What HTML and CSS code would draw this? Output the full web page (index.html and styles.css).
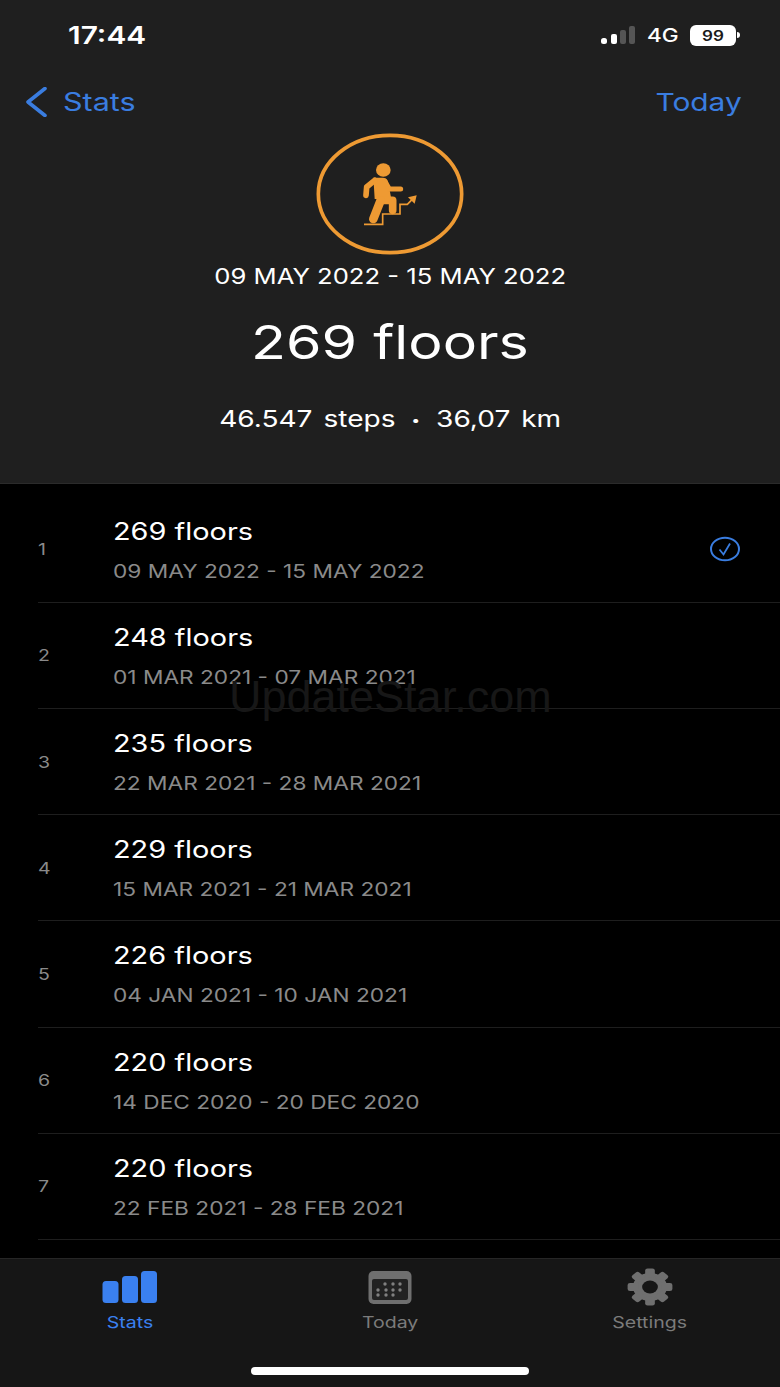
FILE: index.html
```html
<!DOCTYPE html>
<html lang="en">
<head>
<meta charset="utf-8">
<title>Floors</title>
<link rel="stylesheet" href="styles.css">
</head>
<body>
<div class="screen">
  <header class="hero">
    <div class="status">
      <span class="txt clock">17:44</span>
      <div class="status-right">
        <svg class="signal" width="35" height="19" viewBox="0 0 35 19"><rect x="0" y="12" width="6" height="6" rx="2.500" fill="#fff"/><rect x="10" y="8" width="6" height="10" rx="2" fill="#fff"/><rect x="19" y="4" width="6" height="14" rx="2" fill="#555"/><rect x="28" y="0" width="6" height="18" rx="2" fill="#555"/></svg>
        <span class="txt net">4G</span>
        <div class="battery"><span class="txt batt-num">99</span></div>
        <span class="nub"></span>
      </div>
    </div>
    <nav class="navbar">
      <div class="back">
        <svg width="22" height="30" viewBox="0 0 22 30"><path d="M20 1.500 3 15l17 13.500" fill="none" stroke="#3a7de0" stroke-width="3.600" stroke-linecap="round" stroke-linejoin="round"/></svg>
        <span class="txt nav-link">Stats</span>
      </div>
      <span class="txt nav-link nav-right">Today</span>
    </nav>
    <svg class="badge" width="200" height="140" viewBox="0 0 600 420">
      <ellipse cx="300" cy="207" rx="215" ry="176" fill="none" stroke="#ee9a33" stroke-width="11"/>
      <ellipse cx="280" cy="135" rx="22" ry="20" fill="#ee9a33"/>
      <path d="M250 158h28c8 0 14 4 16 12l10 52h-50z" fill="#ee9a33"/>
      <g fill="none" stroke="#ee9a33" stroke-linecap="round" stroke-linejoin="round">
        <path d="M254 166 230 186 228 211" stroke-width="17"/>
        <path d="M284 168 298 192H332" stroke-width="15"/>
        <path d="M272 226H308V256" stroke-width="23"/>
        <path d="M272 226 250 282" stroke-width="26"/>
      </g>
      <path d="M222 298h56v-31h52v-29h22l20-20" fill="none" stroke="#ee9a33" stroke-width="5"/>
      <path d="M380 211l-26 6 20 19z" fill="#ee9a33"/>
    </svg>
    <div class="txt hero-date">09 MAY 2022 - 15 MAY 2022</div>
    <div class="txt hero-total">269 floors</div>
    <div class="txt hero-sub">46.547 steps <span class="dot">•</span> 36,07 km</div>
  </header>

  <main class="list">
    <div class="row"><span class="txt rank">1</span><div class="info"><div class="txt title">269 floors</div><div class="txt date">09 MAY 2022 - 15 MAY 2022</div></div>
      <svg class="check" width="32" height="26" viewBox="0 0 32 26"><ellipse cx="16" cy="13" rx="14" ry="11.300" fill="none" stroke="#3a7de0" stroke-width="2"/><path d="M10.500 13.500l4 5 6.500-11" fill="none" stroke="#3a7de0" stroke-width="1.800"/></svg>
    </div>
    <div class="row"><span class="txt rank">2</span><div class="info"><div class="txt title">248 floors</div><div class="txt date">01 MAR 2021 - 07 MAR 2021</div></div></div>
    <div class="row"><span class="txt rank">3</span><div class="info"><div class="txt title">235 floors</div><div class="txt date">22 MAR 2021 - 28 MAR 2021</div></div></div>
    <div class="row"><span class="txt rank">4</span><div class="info"><div class="txt title">229 floors</div><div class="txt date">15 MAR 2021 - 21 MAR 2021</div></div></div>
    <div class="row"><span class="txt rank">5</span><div class="info"><div class="txt title">226 floors</div><div class="txt date">04 JAN 2021 - 10 JAN 2021</div></div></div>
    <div class="row"><span class="txt rank">6</span><div class="info"><div class="txt title">220 floors</div><div class="txt date">14 DEC 2020 - 20 DEC 2020</div></div></div>
    <div class="row"><span class="txt rank">7</span><div class="info"><div class="txt title">220 floors</div><div class="txt date">22 FEB 2021 - 28 FEB 2021</div></div></div>
    <div class="watermark">UpdateStar.com</div>
  </main>

  <footer class="tabbar">
    <div class="tabs">
      <div class="tab active">
        <svg width="56" height="38" viewBox="0 0 56 38"><g fill="#3a80f0"><rect x="0.500" y="13" width="16" height="22" rx="3.500"/><rect x="20" y="8" width="16" height="27" rx="3.500"/><rect x="39" y="3" width="16" height="32" rx="3.500"/></g></svg>
        <span class="txt tab-label">Stats</span>
      </div>
      <div class="tab">
        <svg width="44" height="38" viewBox="0 0 44 38">
          <rect x="0.500" y="3" width="43" height="33" rx="5" fill="#6f6f6f"/>
          <rect x="4" y="11" width="36" height="21" rx="2" fill="#222"/>
          <g fill="#808080">
            <circle cx="17" cy="16" r="1.700"/><circle cx="25" cy="16" r="1.700"/><circle cx="32" cy="16" r="1.700"/>
            <circle cx="10" cy="22" r="1.700"/><circle cx="18" cy="22" r="1.700"/><circle cx="25" cy="22" r="1.700"/><circle cx="32" cy="22" r="1.700"/>
            <circle cx="10" cy="27" r="1.700"/><circle cx="18" cy="27" r="1.700"/><circle cx="25" cy="27" r="1.700"/>
          </g>
        </svg>
        <span class="txt tab-label">Today</span>
      </div>
      <div class="tab">
        <svg width="46" height="38" viewBox="0 0 38 38" preserveAspectRatio="none">
          <g fill="#6f6f6f">
            <circle cx="19" cy="19" r="14"/>
            <rect x="15" y="0.500" width="8" height="9" rx="2"/>
            <rect x="15" y="0.500" width="8" height="9" rx="2" transform="rotate(45 19 19)"/>
            <rect x="15" y="0.500" width="8" height="9" rx="2" transform="rotate(90 19 19)"/>
            <rect x="15" y="0.500" width="8" height="9" rx="2" transform="rotate(135 19 19)"/>
            <rect x="15" y="0.500" width="8" height="9" rx="2" transform="rotate(180 19 19)"/>
            <rect x="15" y="0.500" width="8" height="9" rx="2" transform="rotate(225 19 19)"/>
            <rect x="15" y="0.500" width="8" height="9" rx="2" transform="rotate(270 19 19)"/>
            <rect x="15" y="0.500" width="8" height="9" rx="2" transform="rotate(315 19 19)"/>
          </g>
          <circle cx="19" cy="19" r="6.500" fill="#161616"/>
        </svg>
        <span class="txt tab-label">Settings</span>
      </div>
    </div>
    <div class="home-bar"></div>
  </footer>
</div>
</body>
</html>
```

FILE: styles.css
```css
* { box-sizing: border-box; }
html, body { margin: 0; padding: 0; background: #000; }
.screen {
  width: 780px;
  height: 1387px;
  display: flex;
  flex-direction: column;
  overflow: hidden;
  font-family: Inter, "Liberation Sans", sans-serif;
  color: #fff;
}
.txt { display: inline-block; white-space: nowrap; transform: scaleX(1.22); }

.hero {
  height: 484px;
  flex: none;
  background: #1f1f1f;
  border-bottom: 1px solid #2b2b2b;
  display: flex;
  flex-direction: column;
  align-items: center;
}
.status {
  width: 100%;
  height: 70px;
  padding: 0 40px 0 68px;
  display: flex;
  align-items: center;
  justify-content: space-between;
}
.clock { font-size: 24.5px; font-weight: 600; transform-origin: left center; }
.status-right { display: flex; align-items: center; }
.signal { margin-right: 11px; }
.net { font-size: 18.5px; font-weight: 500; width: 32px; margin-right: 11px; transform-origin: left center; }
.battery {
  width: 46px;
  height: 21px;
  background: #fff;
  border-radius: 6px;
  display: flex;
  align-items: center;
  justify-content: center;
}
.batt-num { font-size: 14px; font-weight: 600; color: #1a1a1a; }
.nub { width: 3px; height: 6px; margin-left: 1px; background: #fff; border-radius: 0 3px 3px 0; }

.navbar {
  width: 100%;
  height: 64px;
  padding: 0 38px 0 25px;
  display: flex;
  align-items: center;
  justify-content: space-between;
}
.back { display: flex; align-items: center; gap: 16px; }
.nav-link { font-size: 25px; color: #3a7de0; transform-origin: left center; }
.nav-right { font-size: 24.5px; transform-origin: right center; }

.badge { margin-top: -9px; flex: none; }
.hero-date { font-size: 21px; line-height: 24px; }
.hero-total { font-size: 47px; line-height: 56px; margin-top: 25px; }
.hero-sub { font-size: 23px; line-height: 28px; margin-top: 35px; word-spacing: 2.5px; }
.dot { font-size: 13px; vertical-align: 2px; margin: 0 4px; }

.list { flex: 1; min-height: 0; padding-top: 12.6px; background: #000; position: relative; overflow: hidden; }
.row {
  height: 106.2px;
  margin-left: 38px;
  padding-right: 39px;
  border-bottom: 1px solid #1e1e1e;
  display: flex;
  align-items: center;
}
.rank { width: 75px; flex: none; font-size: 16px; color: #8a8a8a; transform-origin: left center; }
.info { flex: 1; display: flex; flex-direction: column; gap: 13px; padding-top: 2px; }
.title { font-size: 23.7px; line-height: 28px; color: #fff; transform-origin: left center; align-self: flex-start; }
.date { font-size: 18.6px; line-height: 24px; color: #8a8a8a; transform-origin: left center; align-self: flex-start; }
.check { flex: none; }
.watermark {
  position: absolute;
  left: 229px;
  top: 188px;
  font-family: "Liberation Sans", sans-serif;
  font-size: 45px;
  line-height: 50px;
  color: #171717;
  white-space: nowrap;
}

.tabbar {
  height: 129px;
  flex: none;
  background: #161616;
  border-top: 1px solid #262626;
  display: flex;
  flex-direction: column;
  align-items: center;
}
.tabs { width: 100%; display: grid; grid-template-columns: repeat(3, 1fr); padding-top: 9px; }
.tab { display: flex; flex-direction: column; align-items: center; gap: 7px; color: #7b7b7b; }
.tab svg { display: block; }
.tab.active { color: #3a80f0; }
.tab-label { font-size: 16px; line-height: 18px; color: inherit; }
.home-bar { width: 278px; height: 8px; margin-top: 36px; border-radius: 4px; background: #fff; }
```
